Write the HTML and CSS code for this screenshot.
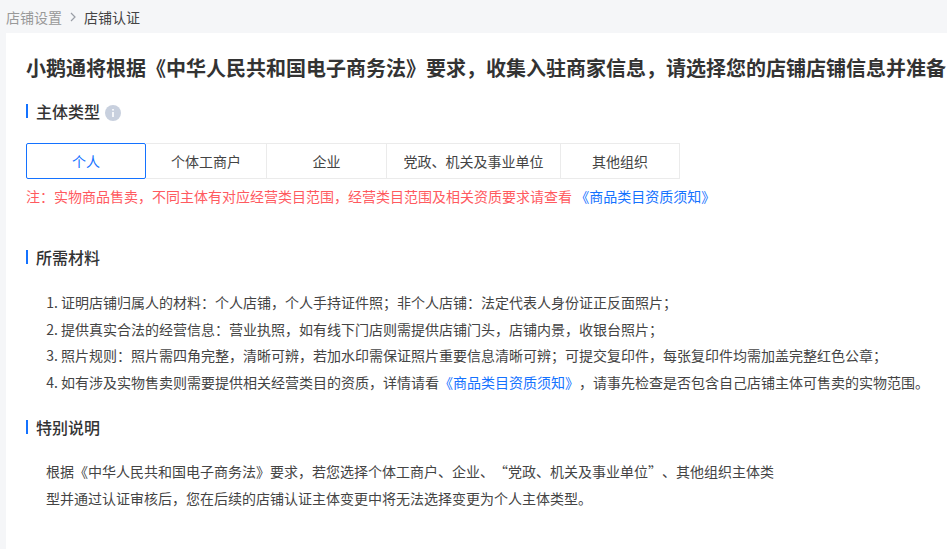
FILE: index.html
```html
<!DOCTYPE html>
<html lang="zh-CN">
<head>
    <meta charset="UTF-8">
    <title>店铺认证</title>
    <link rel="stylesheet" href="styles.css">
</head>
<body>
    <div class="breadcrumb">
        <span class="crumb-parent">店铺设置</span>
        <svg class="crumb-sep" width="6" height="10" viewBox="0 0 6 10"><path d="M1 1l4 4-4 4" fill="none" stroke="#9a9ea6" stroke-width="1.2"/></svg>
        <span class="crumb-current">店铺认证</span>
    </div>
    <div class="card">
        <h1 class="page-title">小鹅通将根据《中华人民共和国电子商务法》要求，收集入驻商家信息，请选择您的店铺店铺信息并准备</h1>

        <div class="section-title first">
            <span>主体类型</span>
            <svg class="info-icon" width="16" height="16" viewBox="0 0 16 16"><circle cx="8" cy="8" r="8" fill="#c8d0de"/><rect x="7.2" y="7" width="1.6" height="5" fill="#fff"/><rect x="7.2" y="4" width="1.6" height="1.6" fill="#fff"/></svg>
        </div>
        <div class="tabs">
            <div class="tab active">个人</div>
            <div class="tab">个体工商户</div>
            <div class="tab">企业</div>
            <div class="tab wide">党政、机关及事业单位</div>
            <div class="tab">其他组织</div>
        </div>
        <p class="note">注：实物商品售卖，不同主体有对应经营类目范围，经营类目范围及相关资质要求请查看 <a class="link">《商品类目资质须知》</a></p>

        <div class="section-title materials">
            <span>所需材料</span>
        </div>
        <ol class="materials-list">
            <li>证明店铺归属人的材料：个人店铺，个人手持证件照；非个人店铺：法定代表人身份证正反面照片；</li>
            <li>提供真实合法的经营信息：营业执照，如有线下门店则需提供店铺门头，店铺内景，收银台照片；</li>
            <li>照片规则：照片需四角完整，清晰可辨，若加水印需保证照片重要信息清晰可辨；可提交复印件，每张复印件均需加盖完整红色公章；</li>
            <li>如有涉及实物售卖则需要提供相关经营类目的资质，详情请看<a class="link">《商品类目资质须知》</a>，请事先检查是否包含自己店铺主体可售卖的实物范围。</li>
        </ol>

        <div class="section-title">
            <span>特别说明</span>
        </div>
        <p class="special">根据《中华人民共和国电子商务法》要求，若您选择个体工商户、企业、“党政、机关及事业单位”、其他组织主体类型并通过认证审核后，您在后续的店铺认证主体变更中将无法选择变更为个人主体类型。</p>
    </div>
</body>
</html>
```

FILE: styles.css
```css
html, body {
    height: 100%;
}
body {
    margin: 0;
    background-color: #f5f6f8;
    font-family: "Noto Sans CJK SC", "Liberation Sans", sans-serif;
    font-size: 14px;
    color: #333;
    text-spacing-trim: space-all;
    overflow: hidden;
    display: flex;
    flex-direction: column;
}
.breadcrumb {
    height: 33px;
    flex-shrink: 0;
    display: flex;
    align-items: center;
    padding-left: 6px;
    font-size: 14px;
}
.crumb-parent {
    color: #999;
}
.crumb-sep {
    margin: 0 8px 0 8px;
}
.crumb-current {
    color: #444;
}
.card {
    flex: 1;
    min-width: 0;
    margin-left: 6px;
    padding: 0 0 0 20px;
    background-color: white;
}
.page-title {
    margin: 0;
    padding-top: 21px;
    font-size: 20px;
    line-height: 28px;
    font-weight: 700;
    color: #333;
    white-space: nowrap;
}
.section-title {
    display: flex;
    align-items: center;
    padding-left: 8px;
    border-left: 2px solid #1472ff;
    height: 14px;
    font-size: 16px;
    font-weight: 500;
    color: #333;
}
.section-title.first {
    margin-top: 22px;
}
.section-title.materials {
    margin-top: 44px;
}
.info-icon {
    margin: 3px 0 0 5px;
}
.tabs {
    display: flex;
    margin-top: 25px;
    width: 654px;
}
.tab {
    width: 120px;
    height: 36px;
    box-sizing: border-box;
    display: flex;
    align-items: center;
    justify-content: center;
    border: 1px solid #ebebeb;
    border-right: none;
    color: #444;
}
.tab:last-child {
    border-right: 1px solid #ebebeb;
}
.tab.wide {
    width: 174px;
}
.tab.active {
    border: 1px solid #1472ff;
    border-radius: 2px;
    color: #1472ff;
}
.tab.active + .tab {
    border-left: none;
}
.note {
    margin: 7px 0 0;
    line-height: 20px;
    color: #ff5a5f;
    white-space: nowrap;
}
.link {
    color: #1472ff;
}
.materials-list {
    margin: 25px 0 24px;
    padding: 0 0 0 35px;
    line-height: 26.7px;
    color: #444;
    white-space: nowrap;
}
.special {
    margin: 24px 0 0 20px;
    width: 735px;
    line-height: 27px;
    color: #444;
}
```
